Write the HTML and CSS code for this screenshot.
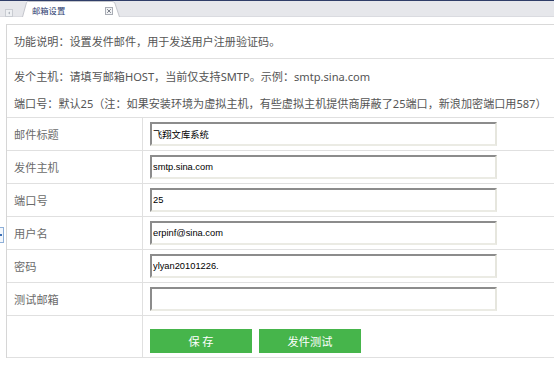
FILE: index.html
```html
<!DOCTYPE html>
<html lang="zh-CN">
<head>
<meta charset="utf-8">
<title>邮箱设置</title>
<link rel="stylesheet" href="styles.css">
</head>
<body>
<div class="topline"></div>
<div class="tabbar">
  <span class="navbtn"><svg width="8" height="8" viewBox="0 0 8 8"><path d="M5 2 L3 4 L5 6 Z" fill="#9aa0aa"/></svg></span>
  <div class="tab">
    <svg class="tabshape" width="98" height="17" viewBox="0 0 98 17"><path d="M0.5 17 L4.5 2.5 Q5 1.5 6.5 1.5 L90 1.5 Q92 1.5 92.8 3 L97.5 17" fill="#fff" stroke="#c4c6cc"/></svg>
    <span class="tabtitle">邮箱设置</span>
    <span class="tabclose"><svg width="8" height="8" viewBox="0 0 8 8"><rect x="0.5" y="0.5" width="7" height="7" fill="#f2f3f5" stroke="#a9adb5"/><path d="M2.2 2.2 L5.8 5.8 M5.8 2.2 L2.2 5.8" stroke="#7d828c" stroke-width="1"/></svg></span>
  </div>
</div>
<div class="spacer"></div>
<div class="main">
  <div class="side"><span class="handle"></span></div>
  <div class="frame">
    <div class="desc desc1">功能说明：设置发件邮件，用于发送用户注册验证码。</div>
    <div class="desc desc2">
      <div>发个主机：请填写邮箱HOST，当前仅支持SMTP。示例：smtp.sina.com</div>
      <div>端口号：默认25（注：如果安装环境为虚拟主机，有些虚拟主机提供商屏蔽了25端口，新浪加密端口用587）</div>
    </div>
    <table class="form">
      <tr><th>邮件标题</th><td><input class="field" type="text" value="飞翔文库系统"></td></tr>
      <tr><th>发件主机</th><td><input class="field" type="text" value="smtp.sina.com"></td></tr>
      <tr><th>端口号</th><td><input class="field" type="text" value="25"></td></tr>
      <tr><th>用户名</th><td><input class="field" type="text" value="erpinf@sina.com"></td></tr>
      <tr><th>密码</th><td><input class="field" type="text" value="ylyan20101226."></td></tr>
      <tr><th>测试邮箱</th><td><input class="field" type="text" value=""></td></tr>
      <tr class="btnrow"><th></th><td><div class="btns"><button class="btn">保 存</button><button class="btn">发件测试</button></div></td></tr>
    </table>
  </div>
</div>
</body>
</html>
```
FILE: styles.css
```css
html, body {
  margin: 0;
  padding: 0;
  background: #fff;
  overflow: hidden;
}
body {
  width: 554px;
  height: 372px;
  font-family: "Noto Sans", "Noto Sans CJK SC", sans-serif;
  color: #555;
}
.topline {
  height: 1px;
  background: #2f3d68;
}
.tabbar {
  height: 15px;
  background: #e6e7eb;
  border-bottom: 1px solid #dadbe0;
  display: flex;
  align-items: flex-end;
  padding-left: 5px;
}
.navbtn {
  width: 8px;
  height: 8px;
  flex: none;
  border: 1px solid #c9ccd2;
  background: #eef0f3;
  box-sizing: border-box;
  display: flex;
  align-items: center;
  justify-content: center;
  align-self: flex-start;
  margin-top: 8px;
}
.navbtn svg { display: block; }
.tab {
  position: relative;
  flex: none;
  width: 98px;
  height: 17px;
  margin-left: 9px;
  margin-bottom: -1px;
  display: flex;
  align-items: center;
}
.tabshape {
  position: absolute;
  left: 0;
  top: 0;
}
.tabtitle {
  position: relative;
  margin-left: 10px;
  margin-top: 2px;
  font-family: "Noto Sans CJK SC", sans-serif;
  font-size: 8.3px;
  line-height: 12px;
  color: #2d4070;
}
.tabclose {
  position: relative;
  margin-left: auto;
  margin-right: 7px;
  margin-top: 4px;
  display: flex;
}
.tabclose svg { display: block; }
.spacer {
  height: 7px;
}
.main {
  display: flex;
}
.side {
  width: 6px;
  flex: none;
  position: relative;
}
.handle {
  position: absolute;
  left: 0;
  top: 203px;
  width: 3px;
  height: 14px;
  border: 1px solid #8fb0d8;
  border-left: none;
  background: #f3f7fc;
}
.handle::after {
  content: "";
  position: absolute;
  left: 0;
  top: 6px;
  width: 2px;
  height: 2px;
  background: #3d6fb5;
}
.frame {
  flex: 1;
  border-left: 1px solid #d6d6d6;
  border-top: 1px solid #d9d9d9;
}
.desc {
  font-size: 11.1px;
  color: #555;
  padding-left: 7px;
}
.desc1 {
  height: 33px;
  line-height: 33px;
  border-bottom: 1px solid #e0e0e0;
}
.desc2 {
  padding-top: 4px;
  height: 54px;
  line-height: 27px;
}
.form {
  width: 100%;
  border-collapse: collapse;
  border-top: 1px solid #e0e0e0;
}
.form th, .form td {
  border-bottom: 1px solid #e0e0e0;
  padding: 0;
  height: 32px;
}
.form th {
  width: 128px;
  padding-left: 7px;
  border-right: 1px solid #e0e0e0;
  text-align: left;
  font-weight: normal;
  font-size: 11.2px;
  color: #6b6b6b;
}
.form td {
  padding-left: 7px;
}
.field {
  display: block;
  box-sizing: border-box;
  width: 347px;
  height: 24px;
  margin: 0;
  padding: 0 0 0 1px;
  border-top: 2px solid #8c8c8c;
  border-left: 2px solid #8c8c8c;
  border-right: 2px solid #e6e6de;
  border-bottom: 2px solid #ebebe4;
  background: #fff;
  font-family: "Liberation Sans", "Noto Sans CJK SC", sans-serif;
  font-size: 9.3px;
  color: #000;
  outline: none;
}
.btnrow th, .btnrow td {
  height: 41px;
}
.btns {
  display: flex;
  gap: 7px;
  padding-top: 9px;
}
.btn {
  width: 102px;
  height: 24px;
  border: none;
  margin: 0;
  padding: 0;
  background: #46b54b;
  color: #fff;
  font-family: "Noto Sans CJK SC", sans-serif;
  font-size: 11.2px;
}
```
